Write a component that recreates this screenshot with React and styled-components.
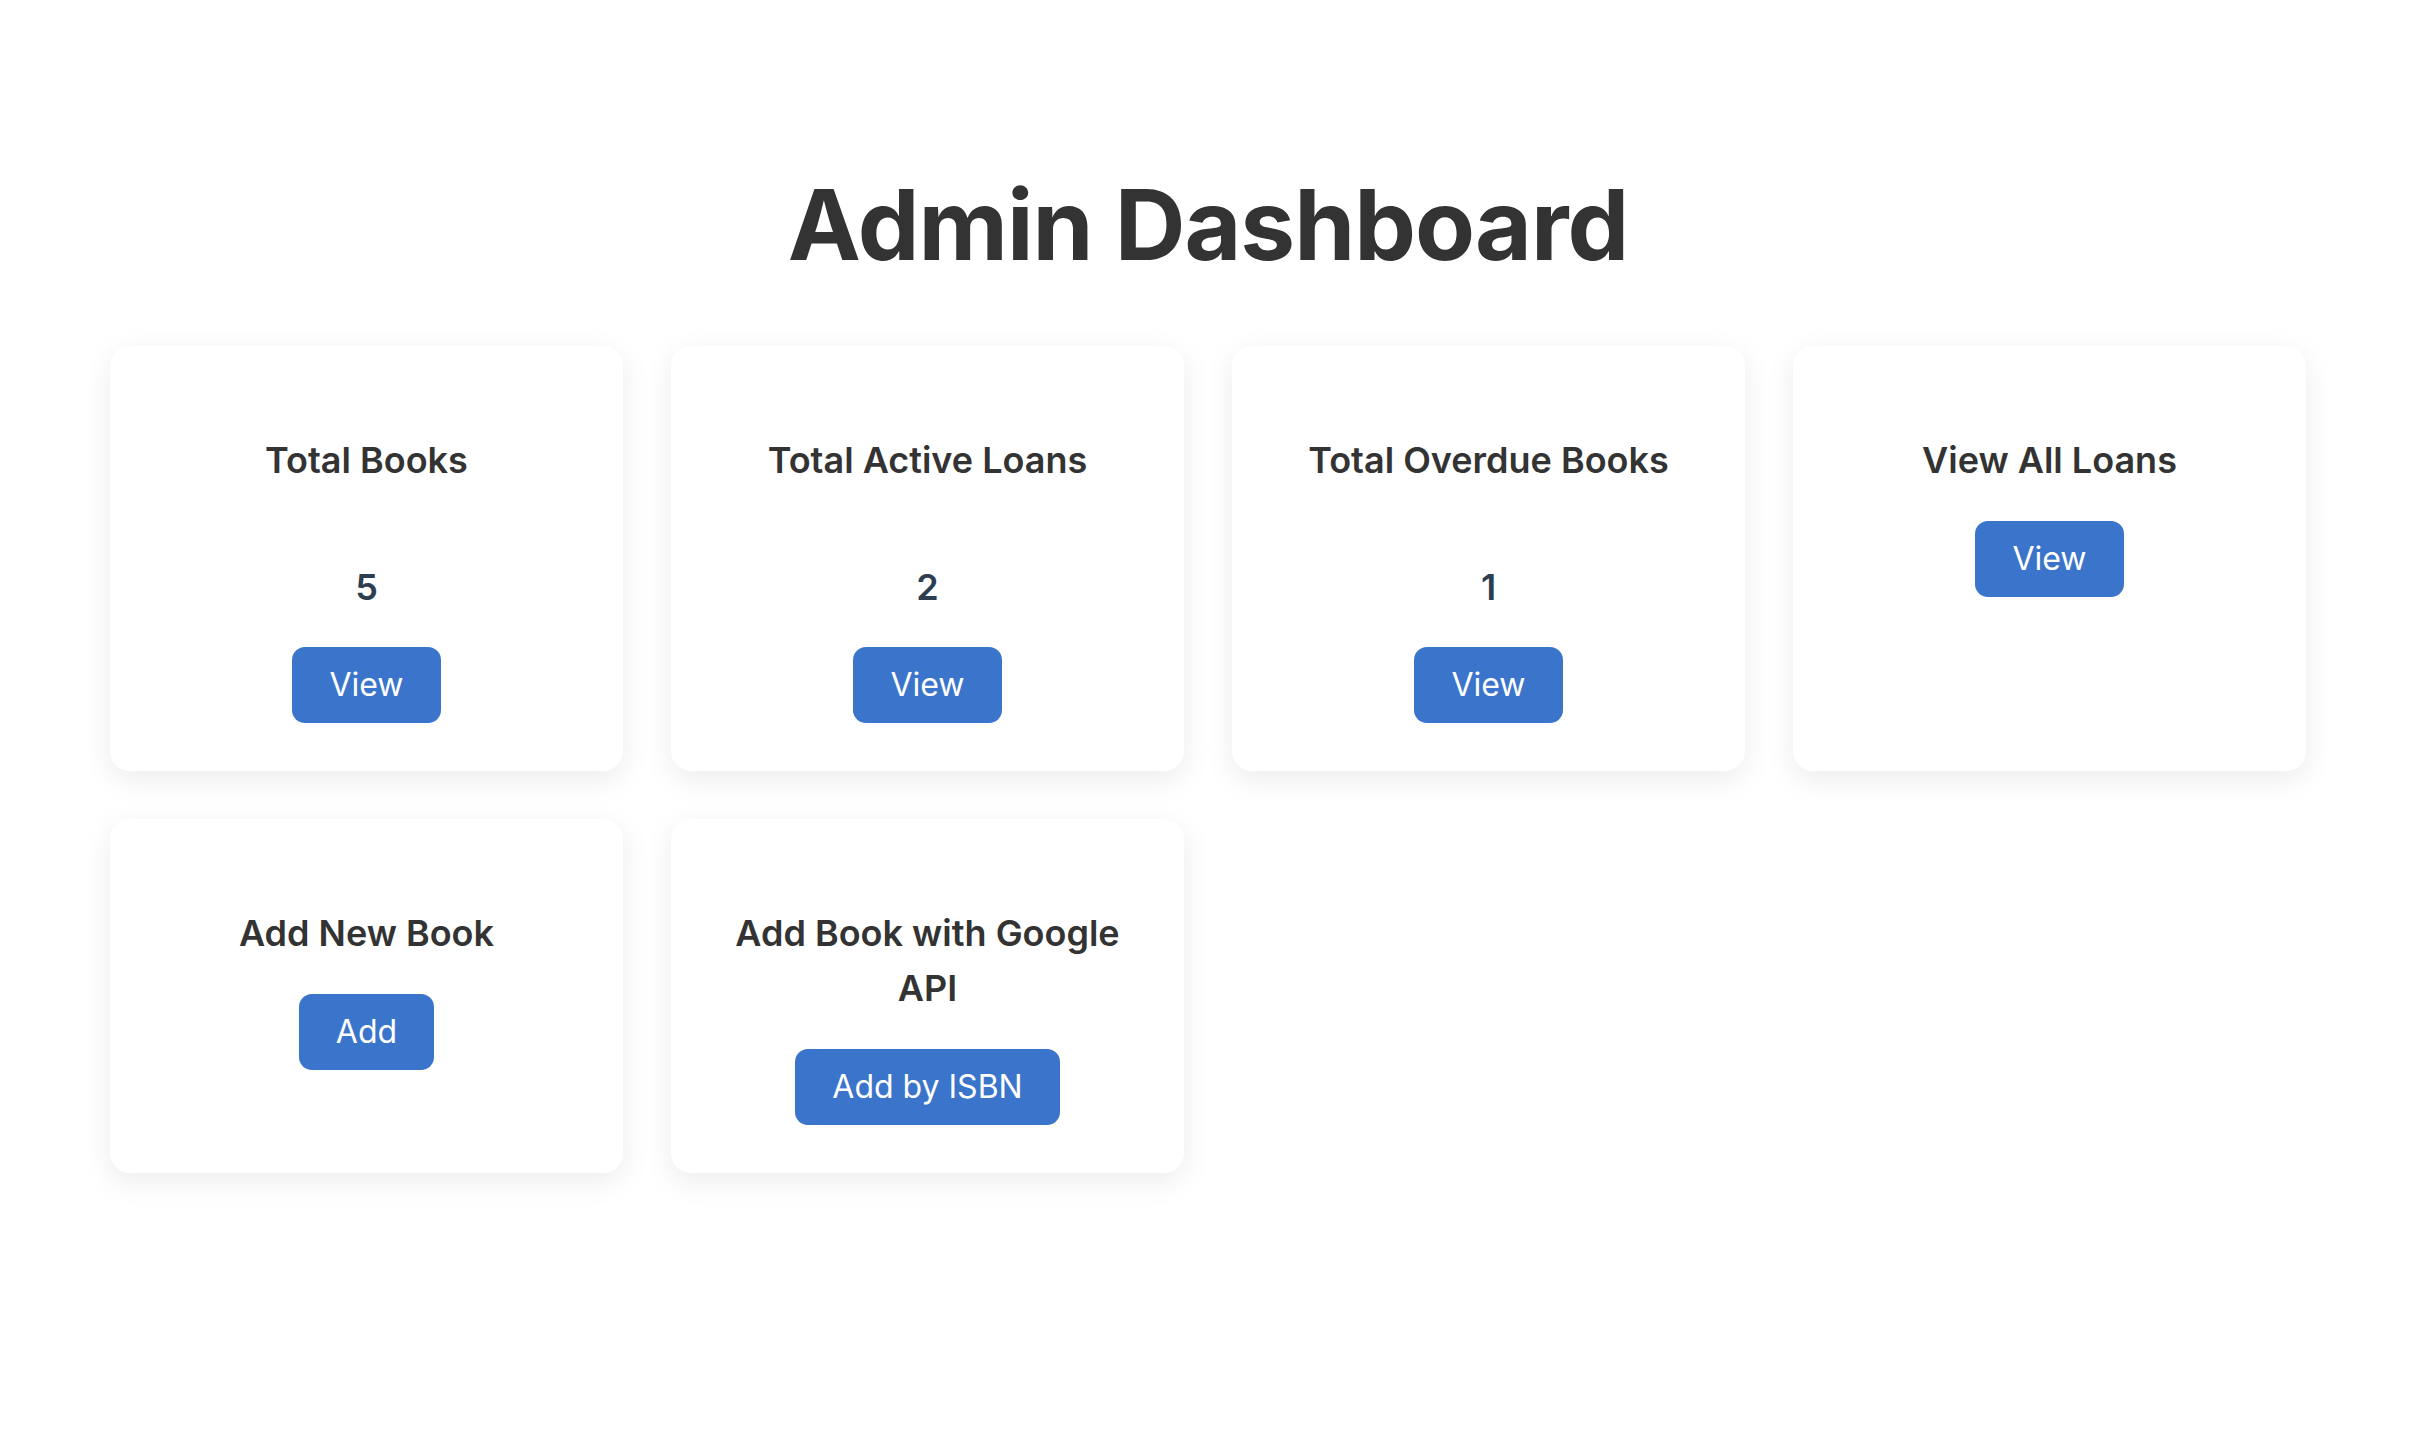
import React from "react";
import styled, { createGlobalStyle } from "styled-components";

const GlobalStyle = createGlobalStyle`
  html, body {
    margin: 0;
    padding: 0;
    background: #ffffff;
  }
  body {
    font-family: Inter, "Noto Sans", "Liberation Sans", sans-serif;
    color: #333333;
  }
`;

const Page = styled.main`
  padding: 166px 110px 120px;
  box-sizing: border-box;
`;

const Title = styled.h1`
  margin: 0 0 62px;
  text-align: center;
  font-size: 98px;
  line-height: 1.2;
  font-weight: 700;
  letter-spacing: -1px;
  color: #333333;
`;

const Grid = styled.section`
  display: grid;
  grid-template-columns: repeat(4, 1fr);
  gap: 48px;
`;

const Card = styled.div`
  display: flex;
  flex-direction: column;
  align-items: center;
  background: #ffffff;
  border-radius: 20px;
  box-shadow: 0 8px 30px rgba(0, 0, 0, 0.08);
  padding: 48px 40px;
  text-align: center;
`;

const CardTitle = styled.h3`
  margin: 39px 0 33px;
  font-size: 36px;
  line-height: 55px;
  font-weight: 600;
  color: #333333;
`;

const Stat = styled.p`
  margin: 39px 0 33px;
  font-size: 36px;
  line-height: 54px;
  font-weight: 600;
  color: #2c3e50;
`;

const Button = styled.button`
  margin: 0;
  border: none;
  border-radius: 13px;
  background: #3a74cb;
  color: #ffffff;
  font-family: inherit;
  font-size: 32px;
  line-height: 48px;
  font-weight: 400;
  padding: 14px 37px;
  cursor: pointer;
`;

const cards = [
  { title: "Total Books", value: "5", action: "View" },
  { title: "Total Active Loans", value: "2", action: "View" },
  { title: "Total Overdue Books", value: "1", action: "View" },
  { title: "View All Loans", action: "View" },
  { title: "Add New Book", action: "Add" },
  { title: "Add Book with Google API", action: "Add by ISBN" },
];

export default function App() {
  return (
    <>
      <GlobalStyle />
      <Page>
        <Title>Admin Dashboard</Title>
        <Grid>
          {cards.map((c) => (
            <Card key={c.title}>
              <CardTitle>{c.title}</CardTitle>
              {c.value !== undefined && <Stat>{c.value}</Stat>}
              <Button>{c.action}</Button>
            </Card>
          ))}
        </Grid>
      </Page>
    </>
  );
}
